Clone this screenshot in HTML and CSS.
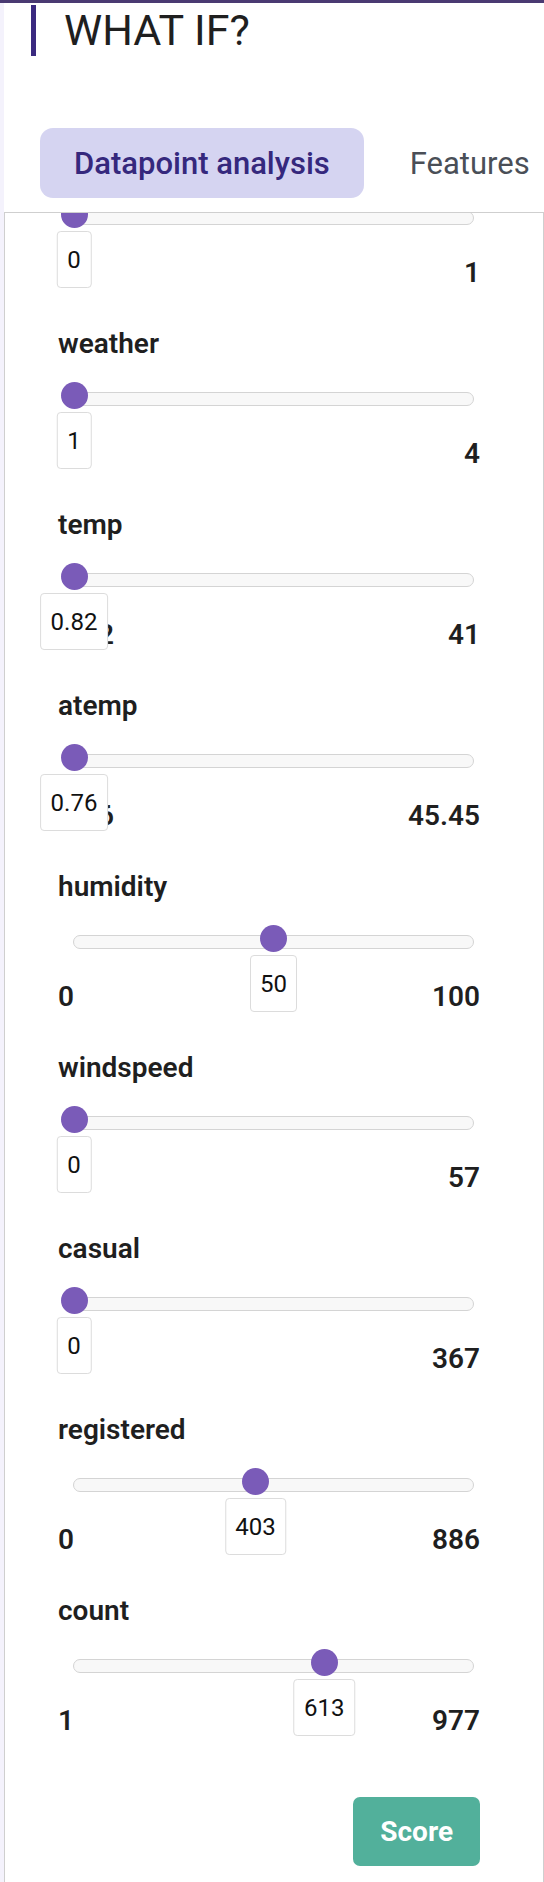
FILE: index.html
```html
<!DOCTYPE html>
<html lang="en">
<head>
<meta charset="utf-8">
<title>What if?</title>
<link rel="stylesheet" href="styles.css">
</head>
<body>
<div class="topbar"></div>
<div class="layout">
  <div class="rail"></div>
  <main class="main">
    <h1 class="page-title">WHAT IF?</h1>
    <nav class="tabs">
      <div class="tab tab-active">Datapoint analysis</div>
      <div class="tab">Features</div>
    </nav>
    <section class="panel">
      <div class="scroll">
        <div class="feature">
          <div class="feature-name">workingday</div>
          <div class="track"><span class="thumb" style="left:0%"></span><span class="value" style="left:0%">0</span></div>
          <div class="bounds"><span>0</span><span>1</span></div>
        </div>
        <div class="feature">
          <div class="feature-name">weather</div>
          <div class="track"><span class="thumb" style="left:0%"></span><span class="value" style="left:0%">1</span></div>
          <div class="bounds"><span>1</span><span>4</span></div>
        </div>
        <div class="feature">
          <div class="feature-name">temp</div>
          <div class="track"><span class="thumb" style="left:0%"></span><span class="value" style="left:0%">0.82</span></div>
          <div class="bounds"><span>0.82</span><span>41</span></div>
        </div>
        <div class="feature">
          <div class="feature-name">atemp</div>
          <div class="track"><span class="thumb" style="left:0%"></span><span class="value" style="left:0%">0.76</span></div>
          <div class="bounds"><span>0.76</span><span>45.45</span></div>
        </div>
        <div class="feature">
          <div class="feature-name">humidity</div>
          <div class="track"><span class="thumb" style="left:50%"></span><span class="value" style="left:50%">50</span></div>
          <div class="bounds"><span>0</span><span>100</span></div>
        </div>
        <div class="feature">
          <div class="feature-name">windspeed</div>
          <div class="track"><span class="thumb" style="left:0%"></span><span class="value" style="left:0%">0</span></div>
          <div class="bounds"><span>0</span><span>57</span></div>
        </div>
        <div class="feature">
          <div class="feature-name">casual</div>
          <div class="track"><span class="thumb" style="left:0%"></span><span class="value" style="left:0%">0</span></div>
          <div class="bounds"><span>0</span><span>367</span></div>
        </div>
        <div class="feature">
          <div class="feature-name">registered</div>
          <div class="track"><span class="thumb" style="left:45.49%"></span><span class="value" style="left:45.49%">403</span></div>
          <div class="bounds"><span>0</span><span>886</span></div>
        </div>
        <div class="feature">
          <div class="feature-name">count</div>
          <div class="track"><span class="thumb" style="left:62.70%"></span><span class="value" style="left:62.70%">613</span></div>
          <div class="bounds"><span>1</span><span>977</span></div>
        </div>
        <div class="actions">
          <button class="score" type="button">Score</button>
        </div>
      </div>
    </section>
  </main>
</div>
</body>
</html>
```

FILE: styles.css
```css
* {
  box-sizing: border-box;
}

html,
body {
  margin: 0;
  padding: 0;
}

body {
  height: 1882px;
  overflow: hidden;
  background: #ffffff;
  color: #1f1f1f;
  font-family: Roboto, "Liberation Sans", Arial, sans-serif;
}

.topbar {
  height: 3px;
  background: #4a3a72;
}

.layout {
  display: flex;
  height: 1879px;
}

.rail {
  flex: none;
  width: 4px;
  background: #f4f2fc;
}

.main {
  flex: 1;
  min-width: 0;
  display: flex;
  flex-direction: column;
}

.page-title {
  margin: 2px 0 0 27px;
  height: 51px;
  padding-left: 28px;
  border-left: 5px solid #3b2a80;
  font-size: 43px;
  font-weight: 400;
  line-height: 51px;
  color: #1f1f1f;
}

.tabs {
  display: flex;
  gap: 12px;
  margin: 72px 0 0 36px;
}

.tab {
  display: flex;
  align-items: center;
  height: 70px;
  padding: 0 34px;
  border-radius: 13px;
  font-size: 31px;
  color: #4a4f57;
  white-space: nowrap;
}

.tab-active {
  background: #d5d4f1;
  color: #35287d;
  font-weight: 500;
}

.panel {
  flex: 1;
  margin-top: 14px;
  padding: 0 63px 0 53px;
  border: 1px solid #cfcfcf;
  border-bottom: none;
  overflow: hidden;
}

.scroll {
  margin-top: -67px;
}

.feature {
  margin-bottom: 39px;
}

.feature-name {
  font-size: 28px;
  font-weight: 600;
  line-height: 33px;
  color: #1f1f1f;
}

.track {
  position: relative;
  height: 14px;
  margin: 32px 6px 0 15px;
  border: 1px solid #d4d4d4;
  border-radius: 7px;
  background: #f8f8f8;
}

.thumb {
  position: absolute;
  top: -11px;
  width: 27px;
  height: 27px;
  margin-left: -13.5px;
  border-radius: 50%;
  background: #7a5bb8;
}

.value {
  position: absolute;
  top: 19px;
  transform: translateX(-50%);
  height: 57px;
  padding: 14px 9.5px 0;
  border: 1px solid #dcdcdc;
  border-radius: 4px;
  background: #ffffff;
  font-size: 24px;
  line-height: 28px;
  color: #111111;
  white-space: nowrap;
}

.bounds {
  display: flex;
  justify-content: space-between;
  align-items: flex-end;
  height: 57px;
  margin-top: 6px;
  font-size: 28px;
  font-weight: 600;
  line-height: 30px;
  color: #1f1f1f;
}

.actions {
  display: flex;
  justify-content: flex-end;
  margin-top: 61px;
}

.score {
  height: 69px;
  padding: 0 27px;
  border: none;
  border-radius: 7px;
  background: #52b09b;
  color: #ffffff;
  font-family: Roboto, "Liberation Sans", Arial, sans-serif;
  font-size: 28px;
  font-weight: 700;
  line-height: 33px;
}
```
